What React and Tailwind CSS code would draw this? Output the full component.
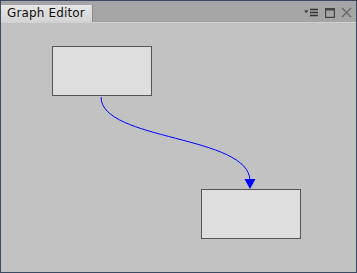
const Node = ({ className }) => (
  <div className={"absolute w-[100px] h-[50px] bg-[#dedede] border border-[#555555] " + className} />
);

export default function App() {
  return (
    <div className="w-[357px] h-[273px] border border-[#3b4a60] bg-[#c2c2c2] flex flex-col overflow-hidden" style={{ fontFamily: '"DejaVu Sans", sans-serif' }}>
      {/* title bar */}
      <div className="h-[21px] bg-[#a5a5a5] flex items-end relative">
        <div className="h-[17px] w-[92px] bg-gradient-to-b from-[#e6e6e6] to-[#d4d4d4] border-r border-[#8a8a8a] text-[12px] tracking-[0.15px] leading-[17px] text-[#111] pl-[6px]">
          Graph Editor
        </div>
        <div className="absolute right-[4px] top-[6px] flex items-center gap-[6px]">
          <svg width="15" height="10" viewBox="0 0 15 10">
            <path d="M0 2.5h4.5l-2.25 2.5z" fill="#333" />
            <path d="M6 1.5h8M6 4.5h8M6 7.5h8" stroke="#333" strokeWidth="1.3" />
          </svg>
          <svg width="10" height="10" viewBox="0 0 10 10">
            <rect x="0.6" y="0.6" width="8.8" height="8.8" fill="none" stroke="#444" strokeWidth="1.2" />
            <rect x="0" y="0" width="10" height="2.5" fill="#444" />
          </svg>
          <svg width="11" height="11" viewBox="0 0 11 11">
            <path d="M1 1l9 9M10 1l-9 9" stroke="#666" strokeWidth="1.4" />
          </svg>
        </div>
      </div>
      {/* canvas */}
      <div className="flex-1 relative border-t border-[#d0d0d0]">
        <Node className="left-[51px] top-[23px]" />
        <Node className="left-[200px] top-[166px]" />
        <svg className="absolute left-0 top-0" width="357" height="250">
          <path d="M100 74 C100 118 249 112 249 158" fill="none" stroke="#0000ff" strokeWidth="1" />
          <path d="M243.5 156 L254.5 156 L249 166 Z" fill="#0000ff" />
        </svg>
      </div>
    </div>
  );
}
